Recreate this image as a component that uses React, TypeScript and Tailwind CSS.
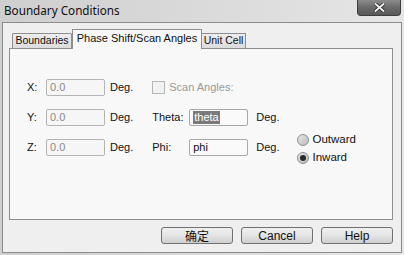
import React from "react";

const ui = { fontFamily: '"Liberation Sans", Arial, sans-serif' };

function Field({ value, disabled, selected }: { value: string; disabled?: boolean; selected?: boolean }) {
  return (
    <div
      className={`w-[59px] h-[17px] border rounded-[2px] flex items-center pl-[3px] text-[11px] ${
        disabled ? "border-[#b4b4b4] bg-[#f6f6f6] text-[#8a8a8a]" : "border-[#a8a8a8] bg-[#fafafa] text-[#111]"
      }`}
    >
      {selected ? <span className="bg-[#7a7a7a] text-white leading-[13px] px-[1px]">{value}</span> : <span>{value}</span>}
    </div>
  );
}

function Radio({ checked, label }: { checked?: boolean; label: string }) {
  return (
    <div className="flex items-center gap-[4px] h-[16px]">
      <div className="w-[12px] h-[12px] rounded-full border border-[#8e8e8e] bg-gradient-to-br from-[#e6e6e6] to-[#bdbdbd] flex items-center justify-center">
        {checked && <div className="w-[6px] h-[6px] rounded-full bg-[#2a2a2a]" />}
      </div>
      <span className="text-[11.5px] text-[#111]">{label}</span>
    </div>
  );
}

function Btn({ children, cjk }: { children: React.ReactNode; cjk?: boolean }) {
  return (
    <div
      className="w-[72px] h-[17px] rounded-[3px] border border-[#707070] bg-gradient-to-b from-[#f0f0f0] via-[#e4e4e4] to-[#cfcfcf] flex items-center justify-center text-[12px] text-[#111]"
      style={cjk ? { fontFamily: '"Noto Sans CJK SC", sans-serif' } : undefined}
    >
      {children}
    </div>
  );
}

export default function App() {
  return (
    <div
      className="w-[404px] h-[255px] flex flex-col bg-gradient-to-r from-[#cfcfcf] via-[#dadada] to-[#e6e6e6] overflow-hidden"
      style={ui}
    >
      <div className="h-[22px] flex justify-between shrink-0">
        <span
          className="pl-[4px] pt-[2px] text-[11.7px] text-[#111]"
          style={{ fontFamily: '"Noto Sans", "Open Sans", sans-serif' }}
        >
          Boundary Conditions
        </span>
        <div className="mr-[3px] w-[44px] h-[16px] rounded-b-[4px] border border-[#3e3e3e] border-t-0 bg-gradient-to-b from-[#8c8c8c] via-[#6a6a6a] to-[#585858] flex items-center justify-center">
          <svg width="11" height="9" viewBox="0 0 11 9">
            <path d="M1 0.5 L10 8.5 M10 0.5 L1 8.5" stroke="#2b2b2b" strokeWidth="3.4" />
            <path d="M1 0.5 L10 8.5 M10 0.5 L1 8.5" stroke="#f4f4f4" strokeWidth="1.8" />
          </svg>
        </div>
      </div>
      <div className="flex-1 mx-[2px] mb-[2px] border border-[#8c8c8c] bg-[#efefef] flex flex-col pl-[6px] pr-[8px] pt-[6px]">
        <div className="flex items-end h-[20px] pl-[3px] relative z-10 -mb-px">
          <div className="w-[60px] h-[16px] border border-[#8e8e8e] bg-gradient-to-b from-[#eeeeee] to-[#dcdcdc] flex items-center justify-center text-[10.5px] text-[#111] rounded-t-[1px]">
            Boundaries
          </div>
          <div className="w-[130px] h-[20px] border border-[#8e8e8e] border-b-0 bg-[#f8f8f8] flex items-center justify-center text-[11px] text-[#111] pb-[2px]">
            Phase Shift/Scan Angles
          </div>
          <div className="w-[44px] h-[16px] border border-l-0 border-[#8e8e8e] bg-gradient-to-b from-[#eeeeee] to-[#dcdcdc] flex items-center justify-center text-[10.5px] text-[#111]">
            Unit Cell
          </div>
        </div>
        <div className="h-[172px] border border-[#8e8e8e] bg-[#f8f8f8] flex pt-[30px] pl-[17px]">
          <div className="flex flex-col gap-[13px]">
            {["X:", "Y:", "Z:"].map((l) => (
              <div key={l} className="flex items-center h-[17px] text-[11px] text-[#111]">
                <span className="w-[19px]">{l}</span>
                <Field value="0.0" disabled />
                <span className="ml-[5px]">Deg.</span>
              </div>
            ))}
          </div>
          <div className="flex flex-col gap-[13px] ml-[19px]">
            <div className="flex items-center h-[17px] text-[11px] text-[#9a9a9a]">
              <div className="w-[13px] h-[13px] border border-[#b6b6b6] bg-[#f2f2f2] mr-[4px]" />
              Scan Angles:
            </div>
            <div className="flex items-center h-[17px] text-[11px] text-[#111]">
              <span className="w-[37px]">Theta:</span>
              <Field value="theta" selected />
              <span className="ml-[8px]">Deg.</span>
            </div>
            <div className="flex items-center h-[17px] text-[11px] text-[#111]">
              <span className="w-[37px]">Phi:</span>
              <Field value="phi" />
              <span className="ml-[8px]">Deg.</span>
            </div>
          </div>
          <div className="flex flex-col ml-[17px] mt-[53px] gap-[2px]">
            <Radio label="Outward" />
            <Radio label="Inward" checked />
          </div>
        </div>
        <div className="flex justify-end gap-[8px] mt-[7px]">
          <Btn cjk>确定</Btn>
          <Btn>Cancel</Btn>
          <Btn>Help</Btn>
        </div>
      </div>
    </div>
  );
}
